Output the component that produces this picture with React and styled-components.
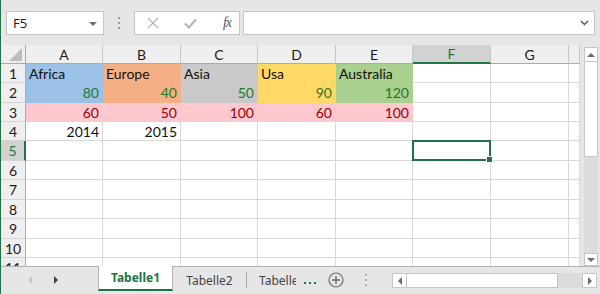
import React from 'react';
import styled, {createGlobalStyle} from 'styled-components';

const GlobalStyle = createGlobalStyle`
  body {
    margin: 0;
    background: #e6e6e6;
    font-family: "Lato", "Noto Sans", sans-serif;
  }
`;

// Sheet data
const COLS = [
    {key: 'A', w: 77}, {key: 'B', w: 78}, {key: 'C', w: 77}, {key: 'D', w: 78},
    {key: 'E', w: 77}, {key: 'F', w: 78}, {key: 'G', w: 78}, {key: '', w: 11},
];
const ROW_H = [19, 20, 19, 19, 20, 19, 20, 19, 20, 19, 20];
const FILLS = ['#9bc2e6', '#f4b084', '#c9c9c9', '#ffd966', '#a9d08e'];
const REGIONS = ['Africa', 'Europe', 'Asia', 'Usa', 'Australia'];
const GOOD = [80, 40, 50, 90, 120];
const BAD = [60, 50, 100, 60, 100];
const YEARS = [2014, 2015];
const SEL = {row: 5, col: 5};

const GREEN = '#217346';

const cellFor = (r, c) => {
    if (r === 1 && c < 5) return {text: REGIONS[c], bg: FILLS[c], align: 'left', color: '#111'};
    if (r === 2 && c < 5) return {text: GOOD[c], bg: FILLS[c], align: 'right', color: '#1f7a25'};
    if (r === 3 && c < 5) return {text: BAD[c], bg: '#ffc7ce', align: 'right', color: '#9c0006'};
    if (r === 4 && c < 2) return {text: YEARS[c], align: 'right', color: '#111'};
    return {};
};

// Window
const Window = styled.div`
  box-sizing: border-box;
  width: 600px;
  height: 294px;
  border-left: 1px solid ${GREEN};
  background: #e6e6e6;
  display: flex;
  flex-direction: column;
  overflow: hidden;
`;

// Formula bar
const FormulaBar = styled.div`
  flex: none;
  height: 45px;
  box-sizing: border-box;
  padding: 11px 5px 0 5px;
  display: flex;
  align-items: flex-start;
`;

const FieldBox = styled.div`
  box-sizing: border-box;
  height: 24px;
  background: #fff;
  border: 1px solid #c6c6c6;
  display: flex;
  align-items: center;
`;

const NameBox = styled(FieldBox)`
  width: 98px;
  padding: 0 6px 0 6px;
  justify-content: space-between;
  font-family: "Noto Sans", sans-serif;
  font-size: 13px;
  color: #222;
`;

const Caret = styled.span`
  width: 0;
  height: 0;
  border-left: 4px solid transparent;
  border-right: 4px solid transparent;
  border-top: 4px solid #6d6d6d;
  margin-top: 1px;
`;

const Grip = styled.div`
  width: 30px;
  height: 24px;
  display: flex;
  flex-direction: column;
  align-items: center;
  justify-content: center;
  gap: 3px;
`;

const Dot = styled.span`
  width: 2px;
  height: 2px;
  background: ${p => p.$color || '#9a9a9a'};
`;

const FxButtons = styled(FieldBox)`
  width: 106px;
  padding: 0 8px 0 12px;
  justify-content: space-between;
`;

const Fx = styled.span`
  font-family: "Liberation Serif", serif;
  font-style: italic;
  font-size: 14px;
  color: #555;
  letter-spacing: -1px;
`;

const FormulaInput = styled(FieldBox)`
  flex: 1;
  margin-left: 3px;
  justify-content: flex-end;
  padding-right: 5px;
`;

// Sheet area
const SheetArea = styled.div`
  flex: none;
  height: 221px;
  display: flex;
`;

const Grid = styled.div`
  flex: none;
  width: 579px;
  height: 221px;
  overflow: hidden;
  background: #fff;
`;

const RowLine = styled.div`
  display: flex;
  height: ${p => p.$h}px;
`;

const HeaderBase = styled.div`
  box-sizing: border-box;
  flex: none;
  height: 100%;
  background: ${p => p.$sel ? '#d2d2d2' : '#efefef'};
  color: ${p => p.$sel ? GREEN : '#1a1a1a'};
  font-size: 14px;
  display: flex;
  align-items: center;
  justify-content: center;
`;

const Corner = styled(HeaderBase)`
  width: 25px;
  border-right: 1px solid #ababab;
  border-bottom: 1px solid #ababab;
  align-items: flex-end;
  justify-content: flex-end;
  padding: 0 3px 2px 0;
`;

const CornerMark = styled.span`
  width: 0;
  height: 0;
  border-left: 13px solid transparent;
  border-bottom: 13px solid #bdbdbd;
`;

const ColHeader = styled(HeaderBase)`
  width: ${p => p.$w}px;
  border-right: 1px solid #c6c6c6;
  border-bottom: ${p => p.$sel ? `2px solid ${GREEN}` : '1px solid #ababab'};
`;

const RowHeader = styled(HeaderBase)`
  width: 25px;
  border-right: ${p => p.$sel ? `2px solid ${GREEN}` : '1px solid #ababab'};
  border-bottom: 1px solid #d4d4d4;
`;

const Cell = styled.div`
  box-sizing: border-box;
  flex: none;
  position: relative;
  width: ${p => p.$w}px;
  height: 100%;
  padding: 0 3px 0 3px;
  background: ${p => p.$bg || '#fff'};
  border-right: 1px solid ${p => p.$bg || '#d9d9d9'};
  border-bottom: 1px solid ${p => p.$bg || '#d9d9d9'};
  color: ${p => p.$color || '#111'};
  font-size: 14px;
  display: flex;
  align-items: center;
  justify-content: ${p => p.$align === 'right' ? 'flex-end' : 'flex-start'};
  white-space: nowrap;
`;

const Selection = styled.span`
  position: absolute;
  top: -1px;
  left: -1px;
  right: -1px;
  bottom: -1px;
  border: 2px solid ${GREEN};
  z-index: 2;
`;

const Handle = styled.span`
  position: absolute;
  right: -4px;
  bottom: -4px;
  width: 5px;
  height: 5px;
  background: ${GREEN};
  border: 1px solid #fff;
`;

// Scrollbars
const VScroll = styled.div`
  flex: none;
  width: 14px;
  height: 219px;
  margin: 2px 3px 0 4px;
  display: flex;
  flex-direction: column;
  background: #dcdcdc;
`;

const ScrollButton = styled.div`
  box-sizing: border-box;
  flex: none;
  width: ${p => p.$w || 15}px;
  height: ${p => p.$h || 15}px;
  background: #fff;
  border: 1px solid #c6c6c6;
  display: flex;
  align-items: center;
  justify-content: center;
`;

const VThumb = styled.div`
  box-sizing: border-box;
  flex: none;
  height: 95px;
  background: #fff;
  border: 1px solid #c6c6c6;
  border-top: none;
`;

const Track = styled.div`
  flex: 1;
`;

const HScroll = styled.div`
  flex: none;
  width: 205px;
  height: 15px;
  margin: 6px 0 0 16px;
  display: flex;
  background: #dcdcdc;
`;

const HThumb = styled.div`
  box-sizing: border-box;
  flex: none;
  width: 151px;
  background: #fff;
  border: 1px solid #c6c6c6;
  border-left: none;
`;

// Bottom bar
const BottomBar = styled.div`
  flex: none;
  height: 28px;
  box-sizing: border-box;
  border-top: 1px solid #b4b4b4;
  display: flex;
  align-items: flex-start;
`;

const Nav = styled.div`
  flex: none;
  width: 97px;
  height: 26px;
  display: flex;
  align-items: center;
  padding-left: 27px;
  box-sizing: border-box;
  gap: 22px;
`;

const Tab = styled.div`
  box-sizing: border-box;
  flex: none;
  height: ${p => p.$active ? 25 : 26}px;
  margin-top: ${p => p.$active ? -1 : 0}px;
  width: ${p => p.$w}px;
  padding-left: ${p => p.$pad || 0}px;
  background: ${p => p.$active ? '#fff' : 'transparent'};
  border-left: ${p => p.$active ? '1px solid #b4b4b4' : 'none'};
  border-right: ${p => p.$active ? '1px solid #b4b4b4' : 'none'};
  border-bottom: ${p => p.$active ? `2px solid ${GREEN}` : 'none'};
  color: ${p => p.$active ? GREEN : '#444'};
  font-family: "Noto Sans", sans-serif;
  font-weight: ${p => p.$active ? 700 : 400};
  font-size: 12px;
  display: flex;
  align-items: center;
  justify-content: ${p => p.$pad ? 'flex-start' : 'center'};
  overflow: hidden;
  white-space: nowrap;
`;

const TabDivider = styled.span`
  flex: none;
  width: 1px;
  height: 16px;
  margin-top: 5px;
  background: #a6a6a6;
`;

const More = styled.div`
  flex: none;
  display: flex;
  gap: 3px;
  margin: 15px 0 0 8px;
`;

const PlusButton = styled.div`
  flex: none;
  margin: 5px 0 0 12px;
  display: flex;
`;

const BottomGrip = styled(Grip)`
  width: 20px;
  height: 26px;
  margin-left: 12px;
`;

const Tri = ({dir, color = '#6d6d6d', size = 4}) => {
    const pts = {
        up: `0,${size} ${size},0 ${size * 2},${size}`,
        down: `0,0 ${size * 2},0 ${size},${size}`,
        left: `${size},0 ${size},${size * 2} 0,${size}`,
        right: `0,0 0,${size * 2} ${size},${size}`,
    }[dir];
    const vertical = dir === 'up' || dir === 'down';
    return (
        <svg width={vertical ? size * 2 : size} height={vertical ? size : size * 2}>
            <polygon points={pts} fill={color}/>
        </svg>
    );
};

export default function App() {
    return (
        <>
            <GlobalStyle/>
            <Window>
                <FormulaBar>
                    <NameBox>
                        <span>F5</span>
                        <Caret/>
                    </NameBox>
                    <Grip>
                        <Dot/><Dot/><Dot/>
                    </Grip>
                    <FxButtons>
                        <svg width="12" height="12" viewBox="0 0 12 12">
                            <path d="M1 1 L11 11 M11 1 L1 11" stroke="#b3b3b3" strokeWidth="1.3" fill="none"/>
                        </svg>
                        <svg width="13" height="11" viewBox="0 0 13 11">
                            <path d="M1 5.5 L4.8 9.5 L12 1.5" stroke="#b3b3b3" strokeWidth="2" fill="none"/>
                        </svg>
                        <Fx>fx</Fx>
                    </FxButtons>
                    <FormulaInput>
                        <svg width="9" height="6" viewBox="0 0 9 6">
                            <path d="M1 1 L4.5 4.5 L8 1" stroke="#555" strokeWidth="1.5" fill="none"/>
                        </svg>
                    </FormulaInput>
                </FormulaBar>

                <SheetArea>
                    <Grid>
                        <RowLine $h={19}>
                            <Corner><CornerMark/></Corner>
                            {COLS.map((col, c) => (
                                <ColHeader key={c} $w={col.w} $sel={c === SEL.col}>{col.key}</ColHeader>
                            ))}
                        </RowLine>
                        {ROW_H.map((h, i) => {
                            const r = i + 1;
                            return (
                                <RowLine key={r} $h={h}>
                                    <RowHeader $sel={r === SEL.row}>{r}</RowHeader>
                                    {COLS.map((col, c) => {
                                        const cell = cellFor(r, c);
                                        const selected = r === SEL.row && c === SEL.col;
                                        return (
                                            <Cell key={c} $w={col.w} $bg={cell.bg} $color={cell.color} $align={cell.align}>
                                                {cell.text}
                                                {selected && <Selection><Handle/></Selection>}
                                            </Cell>
                                        );
                                    })}
                                </RowLine>
                            );
                        })}
                    </Grid>
                    <VScroll>
                        <ScrollButton $w={14}><Tri dir="up"/></ScrollButton>
                        <VThumb/>
                        <Track/>
                        <ScrollButton $w={14} $h={13}><Tri dir="down"/></ScrollButton>
                    </VScroll>
                </SheetArea>

                <BottomBar>
                    <Nav>
                        <Tri dir="left" color="#c4c4c4"/>
                        <Tri dir="right" color="#2b4a3a"/>
                    </Nav>
                    <Tab $active $w={75}>Tabelle1</Tab>
                    <Tab $w={73}>Tabelle2</Tab>
                    <TabDivider/>
                    <Tab $w={49} $pad={12}>Tabelle3</Tab>
                    <More>
                        <Dot $color={GREEN}/><Dot $color={GREEN}/><Dot $color={GREEN}/>
                    </More>
                    <PlusButton>
                        <svg width="16" height="16" viewBox="0 0 16 16">
                            <circle cx="8" cy="8" r="7" stroke="#6d6d6d" strokeWidth="1.2" fill="none"/>
                            <path d="M8 4 V12 M4 8 H12" stroke="#6d6d6d" strokeWidth="1.4"/>
                        </svg>
                    </PlusButton>
                    <BottomGrip>
                        <Dot $color="#b0b0b0"/><Dot $color="#b0b0b0"/><Dot $color="#b0b0b0"/>
                    </BottomGrip>
                    <HScroll>
                        <ScrollButton><Tri dir="left"/></ScrollButton>
                        <HThumb/>
                        <Track/>
                        <ScrollButton><Tri dir="right"/></ScrollButton>
                    </HScroll>
                </BottomBar>
            </Window>
        </>
    );
}
